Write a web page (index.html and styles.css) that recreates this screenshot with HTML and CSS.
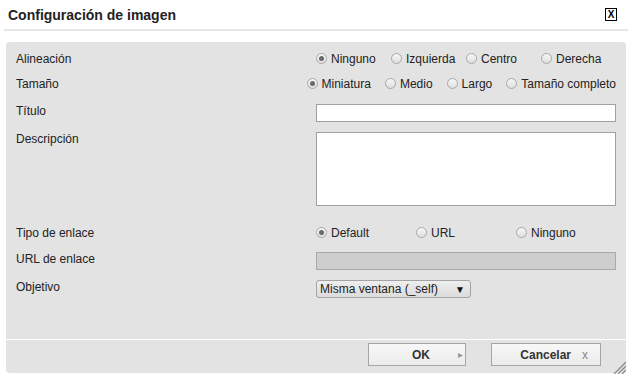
FILE: index.html
```html
<!DOCTYPE html>
<html lang="es">
<head>
    <meta charset="UTF-8">
    <meta name="viewport" content="width=device-width, initial-scale=1.0">
    <title>Configuración de imagen</title>
    <link rel="stylesheet" href="styles.css">
</head>
<body>
    <div class="dialog">
        <!-- barra de título -->
        <div class="titlebar">
            <span class="title">Configuración de imagen</span>
            <span class="close">X</span>
        </div>

        <div class="panel">
            <div class="form">
                <div class="row row-radio first">
                    <span class="label">Alineación</span>
                    <div class="options cols-75">
                        <span class="radio checked"><span class="dot"></span>Ninguno</span>
                        <span class="radio"><span class="dot"></span>Izquierda</span>
                        <span class="radio"><span class="dot"></span>Centro</span>
                        <span class="radio"><span class="dot"></span>Derecha</span>
                    </div>
                </div>

                <div class="row row-radio near">
                    <span class="label">Tamaño</span>
                    <div class="options natural">
                        <span class="radio checked"><span class="dot"></span>Miniatura</span>
                        <span class="radio"><span class="dot"></span>Medio</span>
                        <span class="radio"><span class="dot"></span>Largo</span>
                        <span class="radio"><span class="dot"></span>Tamaño completo</span>
                    </div>
                </div>

                <div class="row row-field wide">
                    <span class="label">Título</span>
                    <div class="input"></div>
                </div>

                <div class="row row-field">
                    <span class="label">Descripción</span>
                    <div class="input textarea"></div>
                </div>

                <div class="row row-radio far">
                    <span class="label">Tipo de enlace</span>
                    <div class="options cols-100">
                        <span class="radio checked"><span class="dot"></span>Default</span>
                        <span class="radio"><span class="dot"></span>URL</span>
                        <span class="radio"><span class="dot"></span>Ninguno</span>
                    </div>
                </div>

                <div class="row row-field mid">
                    <span class="label">URL de enlace</span>
                    <div class="input disabled"></div>
                </div>

                <div class="row row-field">
                    <span class="label">Objetivo</span>
                    <div class="select">
                        <span>Misma ventana (_self)</span>
                        <span class="arrow">▼</span>
                    </div>
                </div>
            </div>

            <div class="footer">
                <button class="btn btn-ok">OK <span class="btn-icon">&#9656;</span></button>
                <button class="btn btn-cancel">Cancelar <span class="btn-icon">x</span></button>
            </div>

            <!-- agarre para redimensionar -->
            <svg class="grip" width="15" height="15" viewBox="0 0 15 15">
                <line x1="3" y1="15" x2="15" y2="3" stroke="#8a8a8a" stroke-width="1.3"/>
                <line x1="7" y1="15" x2="15" y2="7" stroke="#8a8a8a" stroke-width="1.3"/>
                <line x1="11" y1="15" x2="15" y2="11" stroke="#8a8a8a" stroke-width="1.3"/>
            </svg>
        </div>
    </div>
</body>
</html>
```

FILE: styles.css
```css
body {
    margin: 0;
    padding: 0;
    background: #fff;
    font-family: "Liberation Sans", Arial, sans-serif;
    font-size: 12px;
    color: #222;
}
.dialog {
    width: 628px;
    height: 378px;
}
.titlebar {
    height: 29px;
    margin-left: 4px;
    padding: 0 11px 0 4px;
    display: flex;
    justify-content: space-between;
    align-items: center;
    border-bottom: 2px solid #e8e8e8;
}
.title {
    font-size: 14px;
    font-weight: bold;
    color: #222;
}
.close {
    width: 12px;
    height: 13px;
    box-sizing: border-box;
    border: 1px solid #000;
    font-size: 10px;
    font-weight: bold;
    line-height: 11px;
    text-align: center;
    color: #000;
}
/* Panel gris */
.panel {
    position: relative;
    margin: 11px 2px 0 6px;
    height: 331px;
    background: #e3e3e3;
    border-radius: 4px;
    display: flex;
    flex-direction: column;
}
.form {
    height: 300px;
    padding: 0 10px;
    box-sizing: border-box;
}
.row {
    display: flex;
    margin-top: 10px;
}
.row.first { margin-top: 8px; }
.row.near { margin-top: 8px; }
.row.wide { margin-top: 12px; }
.row.mid { margin-top: 11px; }
.row.far { margin-top: 18px; }
.row-radio {
    height: 17px;
    align-items: center;
}
.row-field {
    align-items: flex-start;
}
.label {
    width: 300px;
    flex: none;
    line-height: 14px;
}
.options {
    width: 300px;
    display: flex;
    align-items: center;
}
.options.natural {
    justify-content: flex-end;
    gap: 14px;
}
.cols-75 .radio { width: 75px; }
.cols-100 .radio { width: 100px; }
.radio {
    display: inline-flex;
    align-items: center;
    gap: 4px;
    white-space: nowrap;
    flex: none;
}
.radio .dot {
    position: relative;
    width: 11px;
    height: 11px;
    box-sizing: border-box;
    border: 1px solid #a8a8a8;
    border-radius: 50%;
    background: linear-gradient(#f7f7f7, #dedede);
    flex: none;
}
.radio.checked .dot::after {
    content: '';
    position: absolute;
    left: 2px;
    top: 2px;
    width: 5px;
    height: 5px;
    border-radius: 50%;
    background: #6a6a6a;
}
.input {
    width: 300px;
    height: 18px;
    box-sizing: border-box;
    border: 1px solid #a0a0a0;
    background: #fff;
}
.input.textarea {
    height: 74px;
}
.input.disabled {
    background: #cecece;
    border-color: #a9a9a9;
}
.select {
    width: 155px;
    height: 18px;
    box-sizing: border-box;
    padding: 0 5px 0 3px;
    border: 1px solid #a4a4a4;
    border-radius: 3px;
    background: linear-gradient(#eeeeee, #dcdcdc);
    display: flex;
    justify-content: space-between;
    align-items: center;
    color: #222;
}
.select .arrow {
    font-size: 10px;
    color: #111;
}
/* Pie con botones */
.footer {
    height: 30px;
    border-top: 1px solid #fff;
    display: flex;
    justify-content: flex-end;
    align-items: flex-start;
    gap: 25px;
    padding: 3px 25px 0 0;
    box-sizing: content-box;
}
.btn {
    height: 23px;
    box-sizing: border-box;
    border: 1px solid #a6a6a6;
    background: linear-gradient(#f8f8f8, #ebebeb);
    font-family: "Liberation Sans", Arial, sans-serif;
    font-size: 12px;
    font-weight: bold;
    color: #333;
    display: flex;
    align-items: center;
    justify-content: flex-end;
    padding: 0;
    cursor: pointer;
}
.btn-ok {
    width: 98px;
    padding-right: 2px;
}
.btn-ok .btn-icon {
    margin-left: 28px;
    color: #999;
    font-size: 10px;
    font-weight: normal;
}
.btn-cancel {
    width: 110px;
    padding-right: 12px;
}
.btn-cancel .btn-icon {
    margin-left: 11px;
    color: #888;
    font-weight: normal;
}
.grip {
    position: absolute;
    right: 0;
    bottom: -1px;
}
```
